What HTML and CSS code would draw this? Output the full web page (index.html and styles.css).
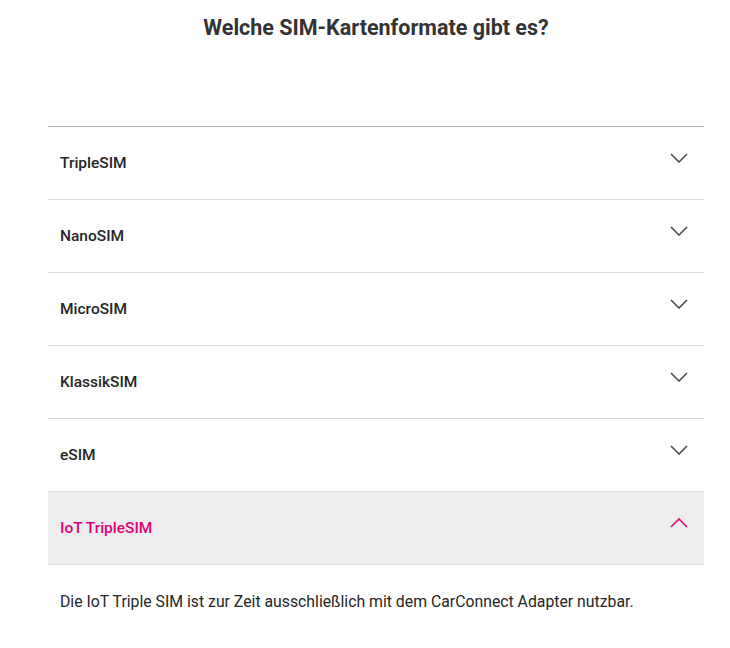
FILE: index.html
```html
<!DOCTYPE html>
<html lang="de">
<head>
<meta charset="utf-8">
<link rel="stylesheet" href="styles.css">
</head>
<body>
<main class="page">
  <h2 class="title">Welche SIM-Kartenformate gibt es?</h2>
  <div class="accordion">
    <div class="item"><span class="label">TripleSIM</span><svg class="chev" viewBox="0 0 18 10"><path d="M1 1 L9 9 L17 1"/></svg></div>
    <div class="item"><span class="label">NanoSIM</span><svg class="chev" viewBox="0 0 18 10"><path d="M1 1 L9 9 L17 1"/></svg></div>
    <div class="item"><span class="label">MicroSIM</span><svg class="chev" viewBox="0 0 18 10"><path d="M1 1 L9 9 L17 1"/></svg></div>
    <div class="item"><span class="label">KlassikSIM</span><svg class="chev" viewBox="0 0 18 10"><path d="M1 1 L9 9 L17 1"/></svg></div>
    <div class="item"><span class="label">eSIM</span><svg class="chev" viewBox="0 0 18 10"><path d="M1 1 L9 9 L17 1"/></svg></div>
    <div class="item open"><span class="label">IoT TripleSIM</span><svg class="chev" viewBox="0 0 18 10"><path d="M1 9 L9 1 L17 9"/></svg></div>
    <div class="panel">Die IoT Triple SIM ist zur Zeit ausschließlich mit dem CarConnect Adapter nutzbar.</div>
  </div>
</main>
</body>
</html>
```
FILE: styles.css
```css
* { box-sizing: border-box; }
body {
  margin: 0;
  background: #fff;
  font-family: Roboto, "Liberation Sans", sans-serif;
  color: #262626;
}
.page {
  padding: 0 26px 0 48px;
}
.title {
  margin: 0;
  padding-top: 14px;
  height: 126px;
  text-align: center;
  font-size: 21.5px;
  font-weight: 700;
  line-height: 28px;
  color: #333;
}
.accordion {
  border-top: 1px solid #b2b2b2;
}
.item {
  display: flex;
  align-items: center;
  justify-content: space-between;
  height: 73px;
  padding: 0 16px 0 12px;
  border-bottom: 1px solid #dcdcdc;
}
.label {
  font-size: 15.5px;
  font-weight: 500;
  color: #262626;
  margin-top: -1px;
}
.chev {
  width: 18px;
  height: 10px;
  margin-top: -10px;
  fill: none;
  stroke: #4b4b4b;
  stroke-width: 1.6;
}
.item.open {
  background: #ededed;
}
.item.open .label { color: #e20074; }
.item.open .chev { stroke: #e20074; }
.panel {
  padding: 27px 12px 0;
  font-size: 15.8px;
  line-height: 20px;
  color: #262626;
}
```
